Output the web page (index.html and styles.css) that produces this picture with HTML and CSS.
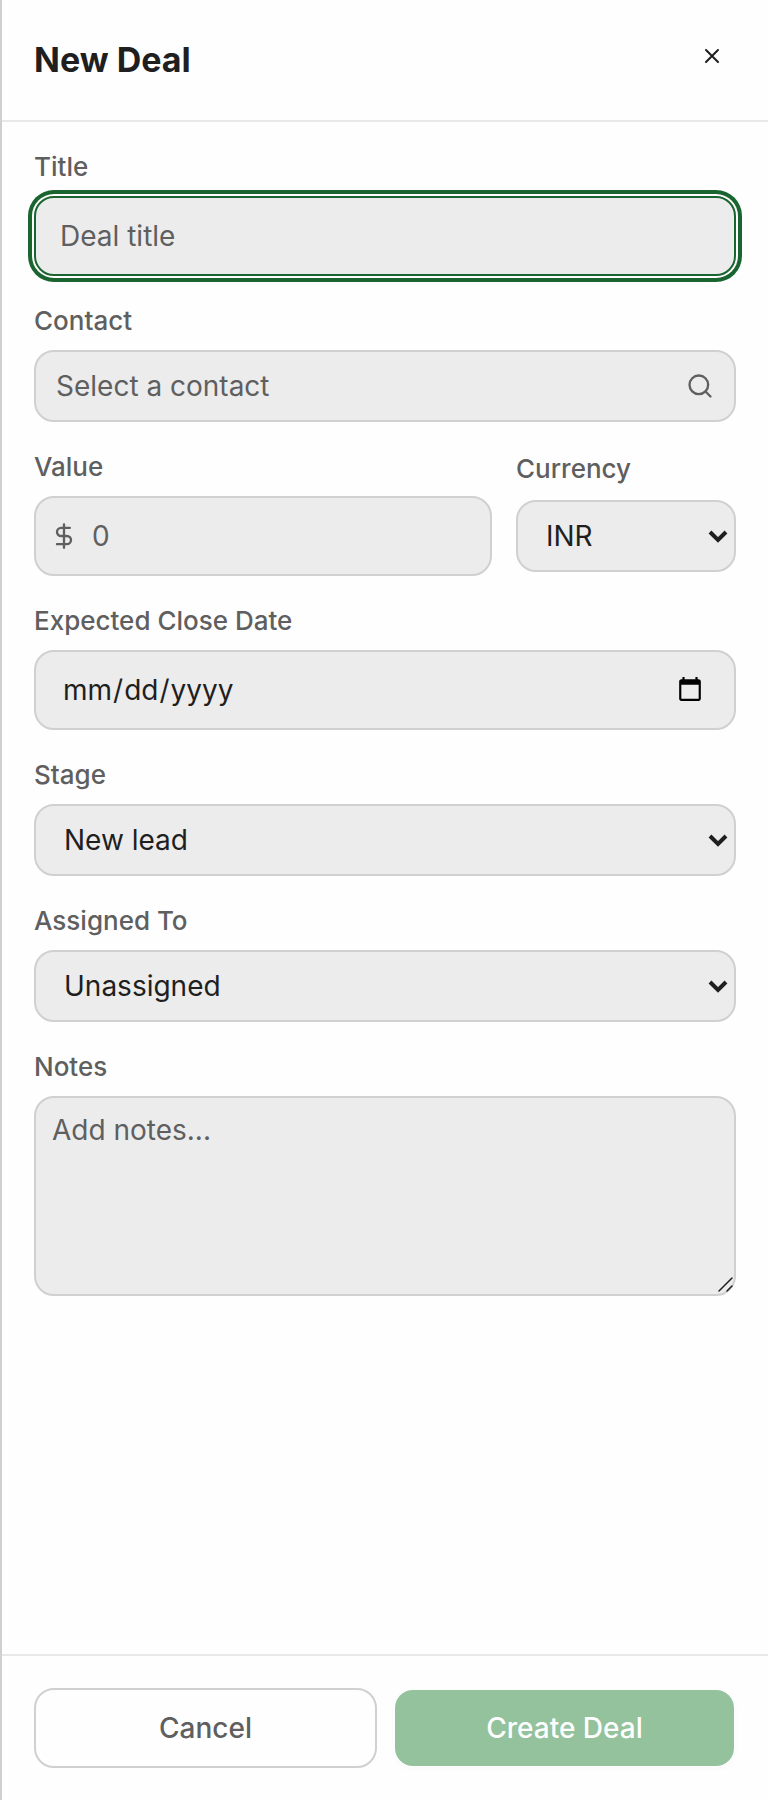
FILE: index.html
```
<!DOCTYPE html>
<html lang="en">

<head>
    <meta charset="utf-8">
    <meta name="viewport" content="width=device-width, initial-scale=1.0">
    <title>New Deal</title>
    <link rel="stylesheet" href="styles.css">
</head>

<body>
    <form class="panel">
        <header class="panel-header">
            <h1>New Deal</h1>
            <button type="button" class="close" aria-label="Close">
                <svg width="24" height="24" viewBox="0 0 24 24"><path d="M18 6 6 18M6 6l12 12"/></svg>
            </button>
        </header>

        <div class="panel-body">
            <div class="field">
                <label for="title">Title</label>
                <input type="text" id="title" class="control" placeholder="Deal title" autofocus>
            </div>

            <div class="field">
                <label for="contact">Contact</label>
                <button type="button" id="contact" class="control picker">
                    <span>Select a contact</span>
                    <svg width="28" height="28" viewBox="0 0 24 24"><circle cx="11" cy="11" r="8"/><path d="m21 21-4.3-4.3"/></svg>
                </button>
            </div>

            <div class="row">
                <div class="field">
                    <label for="value">Value</label>
                    <div class="wrap">
                        <svg class="prefix" width="28" height="28" viewBox="0 0 24 24"><path d="M12 2v20M17 5H9.500a3.500 3.500 0 0 0 0 7h5a3.500 3.500 0 0 1 0 7H6"/></svg>
                        <input type="text" inputmode="decimal" id="value" class="control with-prefix" placeholder="0">
                    </div>
                </div>
                <div class="field">
                    <label for="currency">Currency</label>
                    <div class="wrap">
                        <select id="currency" class="control">
                            <option>INR</option>
                            <option>USD</option>
                            <option>EUR</option>
                        </select>
                        <svg class="arrow" width="20" height="14" viewBox="0 0 20 14"><path d="m2 2 8 8 8-8"/></svg>
                    </div>
                </div>
            </div>

            <div class="field">
                <label for="date">Expected Close Date</label>
                <input type="date" id="date" class="control">
            </div>

            <div class="field">
                <label for="stage">Stage</label>
                <div class="wrap">
                    <select id="stage" class="control">
                        <option>New lead</option>
                        <option>Qualified</option>
                        <option>Won</option>
                    </select>
                    <svg class="arrow" width="20" height="14" viewBox="0 0 20 14"><path d="m2 2 8 8 8-8"/></svg>
                </div>
            </div>

            <div class="field">
                <label for="assigned">Assigned To</label>
                <div class="wrap">
                    <select id="assigned" class="control">
                        <option>Unassigned</option>
                    </select>
                    <svg class="arrow" width="20" height="14" viewBox="0 0 20 14"><path d="m2 2 8 8 8-8"/></svg>
                </div>
            </div>

            <div class="field">
                <label for="notes">Notes</label>
                <div class="wrap">
                    <textarea id="notes" class="control" placeholder="Add notes..."></textarea>
                    <svg class="grip" width="16" height="16" viewBox="0 0 16 16"><path d="M1 14 14 1M9 14l5-5"/></svg>
                </div>
            </div>
        </div>

        <footer class="panel-footer">
            <button type="button" class="btn">Cancel</button>
            <button type="submit" class="btn primary" disabled>Create Deal</button>
        </footer>
    </form>
</body>

</html>
```

FILE: styles.css
```
* {
    box-sizing: border-box;
}

body {
    margin: 0;
    background: #fefefe;
    color: #1f1f1f;
}

body,
button,
input,
select,
textarea {
    font-family: Inter, "Liberation Sans", sans-serif;
    font-size: 28px;
    line-height: 40px;
}

svg {
    display: block;
    fill: none;
    stroke: currentColor;
    stroke-width: 2;
    stroke-linecap: round;
    stroke-linejoin: round;
}

.panel {
    display: flex;
    flex-direction: column;
    min-height: 100vh;
    border-left: 2px solid #d0d0d0;
}

.panel-header {
    display: flex;
    justify-content: space-between;
    align-items: flex-start;
    padding: 32px;
    border-bottom: 2px solid #e8e8e8;
}

h1 {
    margin: 0;
    font-size: 34px;
    line-height: 56px;
    font-weight: 700;
}

.close {
    display: flex;
    align-items: center;
    justify-content: center;
    width: 48px;
    height: 48px;
    padding: 0;
    border: 0;
    background: none;
    color: #1f1f1f;
}

.panel-body {
    display: flex;
    flex-direction: column;
    flex: 1;
    gap: 32px;
    padding: 32px;
}

.field {
    display: grid;
    gap: 16px;
}

.field label {
    align-self: center;
    font-size: 26px;
    line-height: 26px;
    font-weight: 500;
    color: #5f5f5f;
}

.row {
    display: grid;
    grid-template-columns: 1fr 220px;
    gap: 24px;
}

.wrap {
    position: relative;
}

.control {
    display: block;
    width: 100%;
    height: 80px;
    margin: 0;
    padding: 0 24px;
    border: 2px solid #d0d0d0;
    border-radius: 20px;
    background: #ececec;
    color: #1f1f1f;
    outline: none;
}

.control::placeholder {
    color: #5f5f5f;
    opacity: 1;
}

.control:focus {
    border-color: #1a652f;
    box-shadow: 0 0 0 2px #fefefe, 0 0 0 6px #1a652f;
}

.picker {
    display: flex;
    justify-content: space-between;
    align-items: center;
    height: 72px;
    padding: 0 20px;
    color: #5f5f5f;
}

.with-prefix {
    padding-left: 56px;
}

.prefix {
    position: absolute;
    left: 16px;
    top: 26px;
    color: #5f5f5f;
}

input[type="date"] {
    padding: 0 28px 0 26px;
}

select.control {
    height: 72px;
    padding: 0 28px;
    appearance: none;
}

.arrow {
    position: absolute;
    right: 8px;
    top: 30px;
    stroke-width: 4;
    stroke-linecap: butt;
    stroke-linejoin: miter;
    pointer-events: none;
}

textarea.control {
    height: 200px;
    padding: 12px 16px;
    resize: none;
}

.grip {
    position: absolute;
    right: 2px;
    bottom: 3px;
    stroke-width: 1.5;
    pointer-events: none;
}

.panel-footer {
    display: grid;
    grid-template-columns: 1fr 1fr;
    gap: 16px;
    padding: 32px;
    border-top: 2px solid #e8e8e8;
}

.btn {
    height: 80px;
    padding: 0 24px;
    border: 2px solid #d0d0d0;
    border-radius: 20px;
    background: #fefefe;
    color: #5f5f5f;
    font-weight: 500;
}

.btn.primary {
    border-color: transparent;
    background: #93c29d;
    background-clip: padding-box;
    color: #fefefe;
    box-shadow: 0 2px 4px rgba(0, 0, 0, .02);
}
```
